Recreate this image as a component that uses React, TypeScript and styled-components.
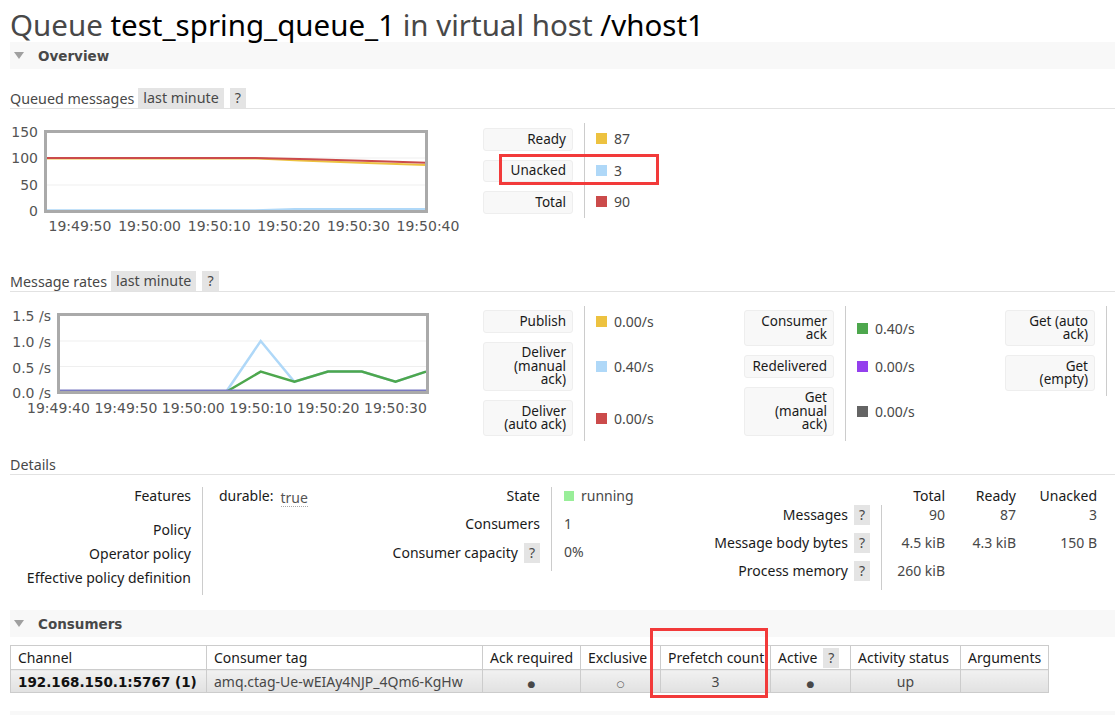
import React from "react";
import styled, { createGlobalStyle } from "styled-components";

const GlobalStyle = createGlobalStyle`
  html, body { margin: 0; padding: 0; background: #fff; overflow: hidden; }
  body {
    font-family: "Noto Sans", "Open Sans", "Liberation Sans", sans-serif;
    font-size: 14px;
    color: #484848;
  }
  * { box-sizing: border-box; }
  svg { display: block; }
`;

const Page = styled.div`
  position: relative;
  width: 1115px;
  height: 715px;
  padding-left: 10px;
  overflow: hidden;
`;

const Title = styled.h1`
  margin: 0;
  padding-top: 8px;
  height: 42px;
  font-size: 29.5px;
  line-height: 34px;
  font-weight: normal;
  color: #484848;
  white-space: nowrap;
`;

const Name = styled.span`
  color: #000;
`;

const SectionBar = styled.div<{ $mt?: number }>`
  display: flex;
  align-items: center;
  gap: 14px;
  height: 27px;
  margin-top: ${(p) => p.$mt ?? 0}px;
  padding-left: 4px;
  background: #f8f8f8;
  font-family: "DejaVu Sans", Verdana, sans-serif;
  font-weight: bold;
  font-size: 13.5px;
  color: #484848;
`;

const Caret = styled.span`
  width: 0;
  height: 0;
  border-left: 5px solid transparent;
  border-right: 5px solid transparent;
  border-top: 7px solid #a0a0a0;
`;

const SubHead = styled.div<{ $mt: number }>`
  display: flex;
  align-items: center;
  height: 21px;
  margin-top: ${(p) => p.$mt}px;
  border-bottom: 1px solid #e2e2e2;
  color: #484848;
  font-size: 14.3px;
  white-space: nowrap;
`;

const Pill = styled.span<{ $ml?: number }>`
  display: inline-block;
  height: 20px;
  line-height: 20px;
  padding: 0 5px;
  margin-left: ${(p) => p.$ml ?? 5}px;
  background: #e4e4e4;
  color: #484848;
`;

const Row = styled.div<{ $mt: number }>`
  display: flex;
  align-items: flex-start;
  margin-top: ${(p) => p.$mt}px;
`;

const ChartBox = styled.div`
  flex: 0 0 473px;
`;

const StatGrid = styled.div<{ $pad: string }>`
  flex: 0 0 261px;
  display: grid;
  grid-template-columns: 101px 160px;
  align-content: start;
  --cell-pad: ${(p) => p.$pad};
`;

const LabelCell = styled.div`
  padding: var(--cell-pad);
  padding-right: 11px;
`;

const LabelBox = styled.div`
  width: 90px;
  padding: 3.5px 6px 3.5px 4px;
  font-size: 13.5px;
  line-height: 13.5px;
  text-align: right;
  white-space: nowrap;
  background: #f8f8f8;
  border: 1px solid #eeeeee;
  border-radius: 3px;
  color: #1a1a1a;
`;

const ValueCell = styled.div`
  display: flex;
  align-items: center;
  gap: 7px;
  padding-left: 11px;
  border-left: 1px solid #cccccc;
  color: #484848;
  white-space: nowrap;
`;

const Swatch = styled.span<{ $c: string }>`
  display: inline-block;
  width: 11px;
  height: 11px;
  background: ${(p) => p.$c};
`;

const DetailsRow = styled.div`
  display: flex;
  align-items: flex-start;
  margin-top: 12px;
`;

const DGrid = styled.div<{ $cols: string }>`
  display: grid;
  grid-template-columns: ${(p) => p.$cols};
  align-content: start;
  flex-shrink: 0;
`;

const DLabel = styled.div<{ $h: number }>`
  height: ${(p) => p.$h}px;
  padding-right: 11px;
  line-height: 18px;
  text-align: right;
  color: #1a1a1a;
  white-space: nowrap;
`;

const DLabelPill = styled.div<{ $h: number }>`
  display: flex;
  justify-content: flex-end;
  align-items: flex-start;
  height: ${(p) => p.$h}px;
  padding-right: 11px;
  line-height: 20px;
  color: #1a1a1a;
  white-space: nowrap;
`;

const DValue = styled.div<{ $h: number; $pl?: number; $border?: boolean; $right?: boolean }>`
  display: flex;
  align-items: flex-start;
  justify-content: ${(p) => (p.$right ? "flex-end" : "flex-start")};
  gap: 7px;
  height: ${(p) => p.$h}px;
  padding-left: ${(p) => p.$pl ?? 0}px;
  padding-top: ${(p) => (p.$right ? 1 : 0)}px;
  border-left: ${(p) => (p.$border ? "1px solid #cccccc" : "none")};
  line-height: 18px;
  color: #484848;
  white-space: nowrap;
`;

const DHead = styled.div`
  height: 18px;
  line-height: 18px;
  text-align: right;
  color: #1a1a1a;
`;

const Dark = styled.span`
  color: #1a1a1a;
`;

const Dotted = styled.span`
  display: inline-block;
  margin-top: 2px;
  line-height: 17px;
  color: #555;
  border-bottom: 1px dotted #aaaaaa;
`;

const StateSwatch = styled.span`
  display: inline-block;
  width: 10px;
  height: 10px;
  margin-top: 4px;
  background: #99ee99;
`;

const Table = styled.table`
  margin-top: 8px;
  border-collapse: collapse;
  table-layout: fixed;
  width: 1038px;
`;

const Col = styled.col<{ $w: number }>`
  width: ${(p) => p.$w}px;
`;

const Th = styled.th`
  height: 24px;
  padding: 0 7px;
  border: 1px solid #cccccc;
  text-align: left;
  font-weight: normal;
  color: #1a1a1a;
  white-space: nowrap;
  background: #fff;
`;

const Td = styled.td<{ $center?: boolean }>`
  height: 23px;
  padding: 0 7px;
  border: 1px solid #cccccc;
  background: linear-gradient(#f1f1f1, #e1e1e1);
  color: #484848;
  text-align: ${(p) => (p.$center ? "center" : "left")};
  white-space: nowrap;
  overflow: hidden;
`;

const ChannelText = styled.span`
  font-family: "DejaVu Sans", Verdana, sans-serif;
  font-weight: bold;
  font-size: 13.5px;
  color: #111;
`;

const Dot = styled.span`
  font-family: "DejaVu Sans", sans-serif;
  font-size: 9px;
  color: #484848;
`;

const Highlight = styled.div<{ $x: number; $y: number; $w: number; $h: number }>`
  position: absolute;
  left: ${(p) => p.$x}px;
  top: ${(p) => p.$y}px;
  width: ${(p) => p.$w}px;
  height: ${(p) => p.$h}px;
  border: 3px solid #f23a3a;
  pointer-events: none;
`;

const AXIS_FONT = '"DejaVu Sans", Verdana, sans-serif';

function QueuedChart() {
  const yl: [string, number][] = [
    ["150", 9],
    ["100", 35],
    ["50", 62],
    ["0", 88],
  ];
  const xl = ["19:49:50", "19:50:00", "19:50:10", "19:50:20", "19:50:30", "19:50:40"];
  return (
    <svg width={450} height={120} viewBox="0 0 450 120">
      <line x1={37} x2={415} y1={62} y2={62} stroke="#efefef" strokeWidth={1} />
      <line x1={37} x2={415} y1={35} y2={35} stroke="#efefef" strokeWidth={1} />
      <polyline points="37,87.6 245,87.6 285,86.2 416,86.2" fill="none" stroke="#afd8f8" strokeWidth={2.5} />
      <polyline points="37,35.4 248,35.4 290,37.5 350,39.8 416,42" fill="none" stroke="#edc240" strokeWidth={2} />
      <polyline points="37,35 245,35 300,36.2 370,38.3 416,39.8" fill="none" stroke="#cb4b4b" strokeWidth={2} />
      <rect x={35.5} y={8.5} width={381} height={80} fill="none" stroke="#aaaaaa" strokeWidth={3} />
      {yl.map(([t, y]) => (
        <text key={t} x={28} y={y} textAnchor="end" dominantBaseline="central" fontFamily={AXIS_FONT} fontSize={14} fill="#545454">
          {t}
        </text>
      ))}
      {xl.map((t, i) => (
        <text key={t} x={70 + i * 69.6} y={103} textAnchor="middle" dominantBaseline="central" fontFamily={AXIS_FONT} fontSize={14} fill="#545454">
          {t}
        </text>
      ))}
    </svg>
  );
}

function RatesChart() {
  const yl: [string, number][] = [
    ["1.5 /s", 10],
    ["1.0 /s", 36],
    ["0.5 /s", 62],
    ["0.0 /s", 87],
  ];
  const xl = ["19:49:40", "19:49:50", "19:50:00", "19:50:10", "19:50:20", "19:50:30"];
  return (
    <svg width={450} height={135} viewBox="0 0 450 135">
      <line x1={50} x2={416} y1={35} y2={35} stroke="#efefef" strokeWidth={1} />
      <line x1={50} x2={416} y1={60.5} y2={60.5} stroke="#efefef" strokeWidth={1} />
      <polyline
        points="216,86 250.7,35 284.4,75.8 318,65.6 351.8,65.6 385.5,75.8 416,65.6"
        fill="none"
        stroke="#afd8f8"
        strokeWidth={2.5}
      />
      <polyline
        points="216,86 250.7,65.6 284.4,75.8 318,65.6 351.8,65.6 385.5,75.8 416,65.6"
        fill="none"
        stroke="#4da74d"
        strokeWidth={2.5}
      />
      <line x1={50} x2={416} y1={85} y2={85} stroke="#7b7bc2" strokeWidth={3} />
      <rect x={48.5} y={8.5} width={369} height={78} fill="none" stroke="#aaaaaa" strokeWidth={3} />
      {yl.map(([t, y]) => (
        <text key={t} x={41} y={y} textAnchor="end" dominantBaseline="central" fontFamily={AXIS_FONT} fontSize={14} fill="#545454">
          {t}
        </text>
      ))}
      {xl.map((t, i) => (
        <text key={t} x={48.5 + i * 67.4} y={102} textAnchor="middle" dominantBaseline="central" fontFamily={AXIS_FONT} fontSize={14} fill="#545454">
          {t}
        </text>
      ))}
    </svg>
  );
}

type Stat = { label: React.ReactNode; color?: string; value?: string };

function StatTable({ items, pad }: { items: Stat[]; pad: string }) {
  return (
    <StatGrid $pad={pad}>
      {items.map((it, i) => (
        <React.Fragment key={i}>
          <LabelCell>
            <LabelBox>{it.label}</LabelBox>
          </LabelCell>
          <ValueCell>
            {it.color && <Swatch $c={it.color} />}
            {it.value}
          </ValueCell>
        </React.Fragment>
      ))}
    </StatGrid>
  );
}

const queued: Stat[] = [
  { label: "Ready", color: "#edc240", value: "87" },
  { label: "Unacked", color: "#afd8f8", value: "3" },
  { label: "Total", color: "#cb4b4b", value: "90" },
];

const rates1: Stat[] = [
  { label: "Publish", color: "#edc240", value: "0.00/s" },
  { label: <>Deliver<br />(manual<br />ack)</>, color: "#afd8f8", value: "0.40/s" },
  { label: <>Deliver<br />(auto ack)</>, color: "#cb4b4b", value: "0.00/s" },
];

const rates2: Stat[] = [
  { label: <>Consumer<br />ack</>, color: "#4da74d", value: "0.40/s" },
  { label: "Redelivered", color: "#9440ed", value: "0.00/s" },
  { label: <>Get<br />(manual<br />ack)</>, color: "#646464", value: "0.00/s" },
];

const rates3: Stat[] = [
  { label: <>Get (auto<br />ack)</> },
  { label: <>Get<br />(empty)</> },
];

export default function App() {
  return (
    <Page>
      <GlobalStyle />
      <Title>
        Queue <Name>test_spring_queue_1</Name> in virtual host <Name>/vhost1</Name>
      </Title>

      <SectionBar>
        <Caret />
        Overview
      </SectionBar>

      <SubHead $mt={19}>
        Queued messages
        <Pill $ml={4}>last minute</Pill>
        <Pill $ml={6}>?</Pill>
      </SubHead>

      <Row $mt={14}>
        <ChartBox>
          <QueuedChart />
        </ChartBox>
        <StatTable items={queued} pad="5px 0 4px" />
      </Row>

      <SubHead $mt={28}>
        Message rates
        <Pill $ml={4}>last minute</Pill>
        <Pill $ml={6}>?</Pill>
      </SubHead>

      <Row $mt={14}>
        <ChartBox>
          <RatesChart />
        </ChartBox>
        <StatTable items={rates1} pad="4px 0 5px" />
        <StatTable items={rates2} pad="4px 0 5px" />
        <StatTable items={rates3} pad="4px 0 5px" />
      </Row>

      <SubHead $mt={13}>Details</SubHead>

      <DetailsRow>
        <DGrid $cols="192px 168px">
          <DLabel $h={34}>Features</DLabel>
          <DValue $h={34} $pl={16} $border>
            <Dark>durable:</Dark>
            <Dotted>true</Dotted>
          </DValue>
          <DLabel $h={24}>Policy</DLabel>
          <DValue $h={24} $pl={16} $border />
          <DLabel $h={24}>Operator policy</DLabel>
          <DValue $h={24} $pl={16} $border />
          <DLabel $h={26}>Effective policy definition</DLabel>
          <DValue $h={26} $pl={16} $border />
        </DGrid>

        <DGrid $cols="181px 149px">
          <DLabel $h={28}>State</DLabel>
          <DValue $h={28} $pl={12} $border>
            <StateSwatch />
            running
          </DValue>
          <DLabel $h={28}>Consumers</DLabel>
          <DValue $h={28} $pl={12} $border>1</DValue>
          <DLabelPill $h={28}>
            Consumer capacity
            <Pill $ml={6}>?</Pill>
          </DLabelPill>
          <DValue $h={28} $pl={12} $border>0%</DValue>
        </DGrid>

        <DGrid $cols="181px 64px 71px 81px">
          <DHead />
          <DHead>Total</DHead>
          <DHead>Ready</DHead>
          <DHead>Unacked</DHead>

          <DLabelPill $h={28}>
            Messages
            <Pill $ml={6}>?</Pill>
          </DLabelPill>
          <DValue $h={28} $border $right>90</DValue>
          <DValue $h={28} $right>87</DValue>
          <DValue $h={28} $right>3</DValue>

          <DLabelPill $h={28}>
            Message body bytes
            <Pill $ml={6}>?</Pill>
          </DLabelPill>
          <DValue $h={28} $border $right>4.5 kiB</DValue>
          <DValue $h={28} $right>4.3 kiB</DValue>
          <DValue $h={28} $right>150 B</DValue>

          <DLabelPill $h={29}>
            Process memory
            <Pill $ml={6}>?</Pill>
          </DLabelPill>
          <DValue $h={29} $border $right>260 kiB</DValue>
          <DValue $h={29} $right />
          <DValue $h={29} $right />
        </DGrid>
      </DetailsRow>

      <SectionBar $mt={15}>
        <Caret />
        Consumers
      </SectionBar>

      <Table>
        <colgroup>
          <Col $w={196} />
          <Col $w={276} />
          <Col $w={98} />
          <Col $w={80} />
          <Col $w={110} />
          <Col $w={80} />
          <Col $w={110} />
          <Col $w={88} />
        </colgroup>
        <thead>
          <tr>
            <Th>Channel</Th>
            <Th>Consumer tag</Th>
            <Th>Ack required</Th>
            <Th>Exclusive</Th>
            <Th>Prefetch count</Th>
            <Th>
              Active
              <Pill $ml={6}>?</Pill>
            </Th>
            <Th>Activity status</Th>
            <Th>Arguments</Th>
          </tr>
        </thead>
        <tbody>
          <tr>
            <Td>
              <ChannelText>192.168.150.1:5767 (1)</ChannelText>
            </Td>
            <Td>amq.ctag-Ue-wEIAy4NJP_4Qm6-KgHw</Td>
            <Td $center>
              <Dot>●</Dot>
            </Td>
            <Td $center>
              <Dot>○</Dot>
            </Td>
            <Td $center>3</Td>
            <Td $center>
              <Dot>●</Dot>
            </Td>
            <Td $center>up</Td>
            <Td />
          </tr>
        </tbody>
      </Table>

      <SectionBar $mt={18} />

      <Highlight $x={499} $y={154} $w={160} $h={31} />
      <Highlight $x={650} $y={628} $w={118} $h={70} />
    </Page>
  );
}
